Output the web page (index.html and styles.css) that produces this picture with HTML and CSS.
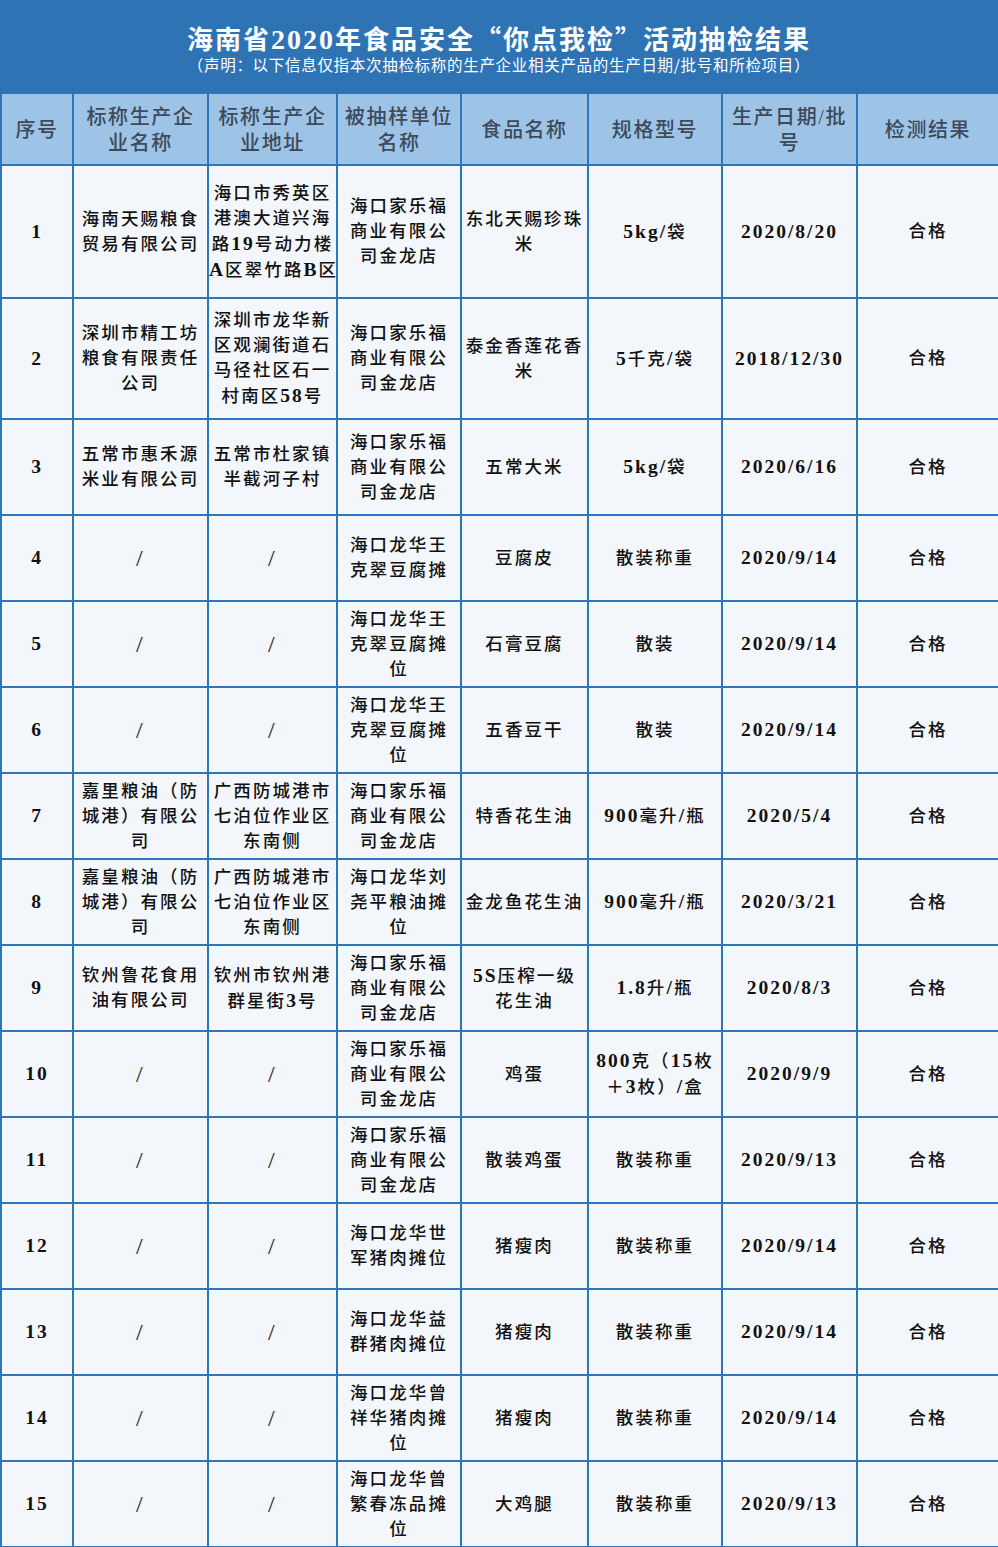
FILE: index.html
```html
<!DOCTYPE html>
<html lang="zh-CN">
<head>
<meta charset="utf-8">
<title>海南省2020年食品安全“你点我检”活动抽检结果</title>
<link rel="stylesheet" href="styles.css">
</head>
<body>
<div class="banner">
  <div class="title">海南省<span class="n">2020</span>年食品安全<span class="q">“</span>你点我检<span class="q">”</span>活动抽检结果</div>
  <div class="sub">（声明：以下信息仅指本次抽检标称的生产企业相关产品的生产日期/批号和所检项目）</div>
</div>
<table class="grid">
  <colgroup>
    <col class="c1"><col class="c2"><col class="c3"><col class="c4"><col class="c5"><col class="c6"><col class="c7"><col class="c8">
  </colgroup>
  <thead>
    <tr class="hrow">
      <th>序号</th>
      <th>标称生产企<br>业名称</th>
      <th>标称生产企<br>业地址</th>
      <th>被抽样单位<br>名称</th>
      <th>食品名称</th>
      <th>规格型号</th>
      <th>生产日期/批<br>号</th>
      <th>检测结果</th>
    </tr>
  </thead>
  <tbody>
    <tr class="r133">
      <td><b>1</b></td>
      <td>海南天赐粮食<br>贸易有限公司</td>
      <td>海口市秀英区<br>港澳大道兴海<br>路<b>19</b>号动力楼<br><b>A</b>区翠竹路<b>B</b>区</td>
      <td>海口家乐福<br>商业有限公<br>司金龙店</td>
      <td>东北天赐珍珠<br>米</td>
      <td><b>5kg/</b>袋</td>
      <td><b>2020/8/20</b></td>
      <td>合格</td>
    </tr>
    <tr class="r121">
      <td><b>2</b></td>
      <td>深圳市精工坊<br>粮食有限责任<br>公司</td>
      <td>深圳市龙华新<br>区观澜街道石<br>马径社区石一<br>村南区<b>58</b>号</td>
      <td>海口家乐福<br>商业有限公<br>司金龙店</td>
      <td>泰金香莲花香<br>米</td>
      <td><b>5</b>千克<b>/</b>袋</td>
      <td><b>2018/12/30</b></td>
      <td>合格</td>
    </tr>
    <tr class="r96">
      <td><b>3</b></td>
      <td>五常市惠禾源<br>米业有限公司</td>
      <td>五常市杜家镇<br>半截河子村</td>
      <td>海口家乐福<br>商业有限公<br>司金龙店</td>
      <td>五常大米</td>
      <td><b>5kg/</b>袋</td>
      <td><b>2020/6/16</b></td>
      <td>合格</td>
    </tr>
    <tr class="r86">
      <td><b>4</b></td>
      <td class="sl">/</td>
      <td class="sl">/</td>
      <td>海口龙华王<br>克翠豆腐摊</td>
      <td>豆腐皮</td>
      <td>散装称重</td>
      <td><b>2020/9/14</b></td>
      <td>合格</td>
    </tr>
    <tr class="r86">
      <td><b>5</b></td>
      <td class="sl">/</td>
      <td class="sl">/</td>
      <td>海口龙华王<br>克翠豆腐摊<br>位</td>
      <td>石膏豆腐</td>
      <td>散装</td>
      <td><b>2020/9/14</b></td>
      <td>合格</td>
    </tr>
    <tr class="r86">
      <td><b>6</b></td>
      <td class="sl">/</td>
      <td class="sl">/</td>
      <td>海口龙华王<br>克翠豆腐摊<br>位</td>
      <td>五香豆干</td>
      <td>散装</td>
      <td><b>2020/9/14</b></td>
      <td>合格</td>
    </tr>
    <tr class="r86">
      <td><b>7</b></td>
      <td>嘉里粮油（防<br>城港）有限公<br>司</td>
      <td>广西防城港市<br>七泊位作业区<br>东南侧</td>
      <td>海口家乐福<br>商业有限公<br>司金龙店</td>
      <td>特香花生油</td>
      <td><b>900</b>毫升<b>/</b>瓶</td>
      <td><b>2020/5/4</b></td>
      <td>合格</td>
    </tr>
    <tr class="r86">
      <td><b>8</b></td>
      <td>嘉皇粮油（防<br>城港）有限公<br>司</td>
      <td>广西防城港市<br>七泊位作业区<br>东南侧</td>
      <td>海口龙华刘<br>尧平粮油摊<br>位</td>
      <td>金龙鱼花生油</td>
      <td><b>900</b>毫升<b>/</b>瓶</td>
      <td><b>2020/3/21</b></td>
      <td>合格</td>
    </tr>
    <tr class="r86">
      <td><b>9</b></td>
      <td>钦州鲁花食用<br>油有限公司</td>
      <td>钦州市钦州港<br>群星街<b>3</b>号</td>
      <td>海口家乐福<br>商业有限公<br>司金龙店</td>
      <td><b>5S</b>压榨一级<br>花生油</td>
      <td><b>1.8</b>升<b>/</b>瓶</td>
      <td><b>2020/8/3</b></td>
      <td>合格</td>
    </tr>
    <tr class="r86">
      <td><b>10</b></td>
      <td class="sl">/</td>
      <td class="sl">/</td>
      <td>海口家乐福<br>商业有限公<br>司金龙店</td>
      <td>鸡蛋</td>
      <td><b>800</b>克（<b>15</b>枚<br>＋<b>3</b>枚）<b>/</b>盒</td>
      <td><b>2020/9/9</b></td>
      <td>合格</td>
    </tr>
    <tr class="r86">
      <td><b>11</b></td>
      <td class="sl">/</td>
      <td class="sl">/</td>
      <td>海口家乐福<br>商业有限公<br>司金龙店</td>
      <td>散装鸡蛋</td>
      <td>散装称重</td>
      <td><b>2020/9/13</b></td>
      <td>合格</td>
    </tr>
    <tr class="r86">
      <td><b>12</b></td>
      <td class="sl">/</td>
      <td class="sl">/</td>
      <td>海口龙华世<br>军猪肉摊位</td>
      <td>猪瘦肉</td>
      <td>散装称重</td>
      <td><b>2020/9/14</b></td>
      <td>合格</td>
    </tr>
    <tr class="r86">
      <td><b>13</b></td>
      <td class="sl">/</td>
      <td class="sl">/</td>
      <td>海口龙华益<br>群猪肉摊位</td>
      <td>猪瘦肉</td>
      <td>散装称重</td>
      <td><b>2020/9/14</b></td>
      <td>合格</td>
    </tr>
    <tr class="r86">
      <td><b>14</b></td>
      <td class="sl">/</td>
      <td class="sl">/</td>
      <td>海口龙华曾<br>祥华猪肉摊<br>位</td>
      <td>猪瘦肉</td>
      <td>散装称重</td>
      <td><b>2020/9/14</b></td>
      <td>合格</td>
    </tr>
    <tr class="r86">
      <td><b>15</b></td>
      <td class="sl">/</td>
      <td class="sl">/</td>
      <td>海口龙华曾<br>繁春冻品摊<br>位</td>
      <td>大鸡腿</td>
      <td>散装称重</td>
      <td><b>2020/9/13</b></td>
      <td>合格</td>
    </tr>
  </tbody>
</table>
</body>
</html>
```
FILE: styles.css
```css
html, body {
  margin: 0;
  padding: 0;
  background: #ffffff;
}
body {
  width: 998px;
  font-family: "Liberation Serif", "Noto Sans CJK SC", serif;
}
.banner {
  height: 92px;
  box-sizing: border-box;
  background: #2e74b5;
  color: #ffffff;
  text-align: center;
  padding-top: 22px;
}
.title {
  font-family: "Liberation Serif", "Noto Sans CJK SC", serif;
  font-size: 26px;
  line-height: 32px;
  font-weight: 700;
  letter-spacing: 2px;
  height: 32px;
}
.title .n {
  font-size: 28px;
}
.title .q {
  font-family: "Noto Sans CJK SC", sans-serif;
}
.sub {
  font-family: "Noto Sans CJK SC", sans-serif;
  font-size: 15.5px;
  line-height: 20px;
  letter-spacing: 0.7px;
  margin-top: 0;
}
.grid {
  width: 998px;
  table-layout: fixed;
  border-collapse: collapse;
  border: 2px solid #2f76b8;
}
.c1 { width: 72px; }
.c2 { width: 135px; }
.c3 { width: 129px; }
.c4 { width: 124px; }
.c5 { width: 127px; }
.c6 { width: 134px; }
.c7 { width: 135px; }
.c8 { width: 142px; }
.grid th, .grid td {
  border: 2px solid #2f76b8;
  padding: 0;
  text-align: center;
  vertical-align: middle;
  white-space: nowrap;
}
.grid th {
  background: #9dc3e6;
  color: #3d4a5a;
  font-family: "Liberation Serif", "Noto Sans CJK SC", serif;
  font-size: 20px;
  line-height: 26px;
  font-weight: 500;
  letter-spacing: 1.6px;
  height: 68px;
  padding-top: 2px;
}
.grid td {
  background: #f3f6fb;
  color: #111111;
  font-size: 17.5px;
  line-height: 25px;
  font-weight: 500;
  letter-spacing: 2.1px;
}
.grid td b {
  font-weight: 700;
  font-size: 19.5px;
  letter-spacing: 2px;
}
.grid td.sl {
  font-size: 24px;
  color: #222222;
}
.r133 td { height: 131px; }
.r121 td { height: 119px; }
.r96 td { height: 94px; }
.r86 td { height: 84px; }
```
